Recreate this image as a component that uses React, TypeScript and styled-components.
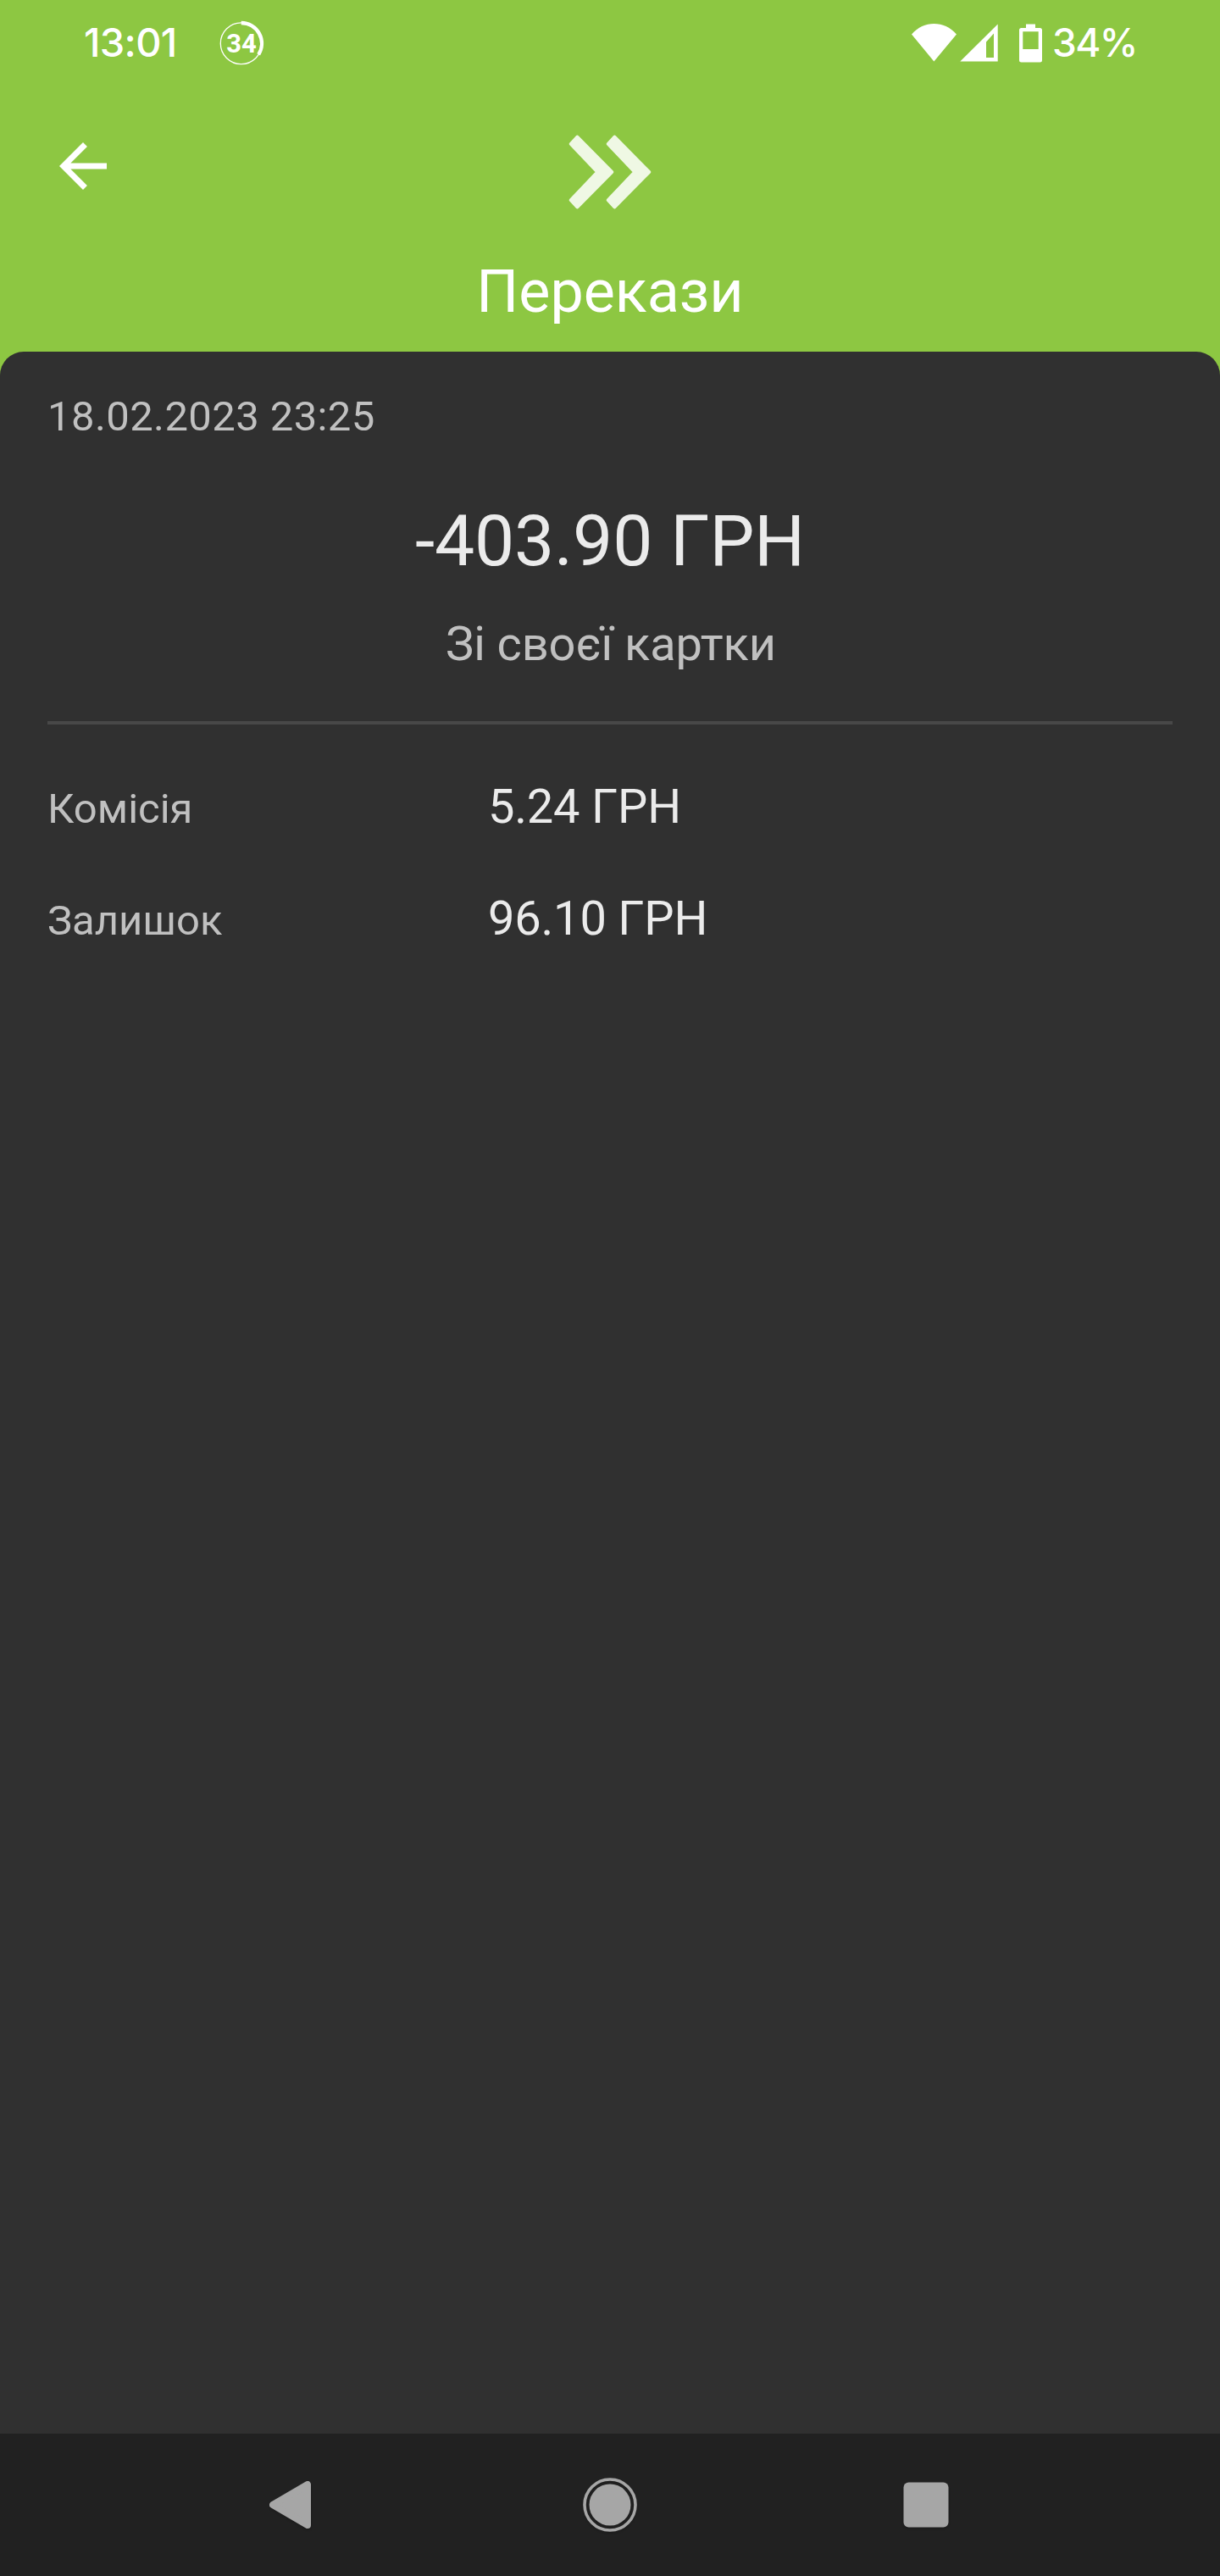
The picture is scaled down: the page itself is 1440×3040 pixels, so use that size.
import React from "react";
import styled, { createGlobalStyle } from "styled-components";

const colors = {
  brand: "#8dc742",
  surface: "#303030",
  navBar: "#212121",
  navIcon: "#a6a6a6",
  muted: "#c0c0c0",
  bright: "#ebebeb",
  line: "#484848",
};

const GlobalStyle = createGlobalStyle`
  * { box-sizing: border-box; }
  body {
    margin: 0;
    background: ${colors.surface};
    font-family: Roboto, "Noto Sans", sans-serif;
  }
  svg { display: block; flex: none; }
`;

const Screen = styled.div`
  display: flex;
  flex-direction: column;
  width: 1440px;
  height: 3040px;
  background: ${colors.brand};
`;

const StatusBar = styled.div`
  display: flex;
  align-items: center;
  justify-content: space-between;
  height: 102px;
  padding: 0 99px;
  color: #fff;
`;

const StatusGroup = styled.div`
  display: flex;
  align-items: center;
`;

const StatusText = styled.span<{ $width: number; $size: number; $spacing: number }>`
  width: ${(p) => p.$width}px;
  padding-bottom: 2px;
  font: 500 ${(p) => p.$size}px/58px Inter, Roboto, sans-serif;
  letter-spacing: ${(p) => p.$spacing}px;
  white-space: nowrap;
`;

const Badge = styled.div`
  display: grid;
  place-items: center;
  width: 56px;
  height: 56px;
  margin-left: 50px;

  > * { grid-area: 1 / 1; }
`;

const BadgeText = styled.span`
  padding-top: 2px;
  font-size: 31px;
  font-weight: 700;
  line-height: 38px;
`;

const Header = styled.header`
  display: grid;
  grid-template-columns: 84px 1fr 84px;
  grid-template-rows: 201px 112px;
  padding: 0 56px;
  color: #fff;
`;

const BackButton = styled.button`
  width: 84px;
  height: 84px;
  margin-top: 52px;
  padding: 0;
  border: 0;
  background: none;
  color: inherit;
`;

const Emblem = styled.div`
  display: flex;
  justify-content: center;
  padding-top: 57px;
`;

const Title = styled.h1`
  grid-column: 1 / -1;
  margin: 0;
  font-size: 70px;
  font-weight: 400;
  line-height: 82px;
  text-align: center;
`;

const Card = styled.main`
  flex: 1;
  padding: 48px 56px 0;
  border-radius: 28px 28px 0 0;
  background: ${colors.surface};
`;

const DateLine = styled.div`
  color: ${colors.muted};
  font-size: 49px;
  letter-spacing: 0.4px;
  line-height: 58px;
`;

const Amount = styled.div`
  margin-top: 69px;
  color: ${colors.bright};
  font-size: 84px;
  letter-spacing: -0.15px;
  line-height: 98px;
  text-align: center;
`;

const Source = styled.div`
  margin-top: 39px;
  padding-left: 2px;
  color: ${colors.muted};
  font-size: 56px;
  letter-spacing: -0.1px;
  line-height: 66px;
  text-align: center;
`;

const Divider = styled.hr`
  height: 4px;
  margin: 58px 0 64px;
  border: 0;
  background: ${colors.line};
`;

const Details = styled.dl`
  display: grid;
  gap: 66px;
  margin: 0;
`;

const DetailRow = styled.div`
  display: grid;
  grid-template-columns: 520px 1fr;
  align-items: baseline;
  height: 66px;
`;

const Label = styled.dt`
  color: ${colors.muted};
  font-size: 49px;
  line-height: 58px;
`;

const Value = styled.dd`
  margin: 0;
  color: ${colors.bright};
  font-size: 56px;
  letter-spacing: -0.2px;
  line-height: 66px;
`;

const NavBar = styled.nav`
  display: flex;
  align-items: center;
  justify-content: center;
  gap: 275px;
  height: 168px;
  background: ${colors.navBar};

  svg { filter: drop-shadow(0 2px 1px rgba(0, 0, 0, 0.15)); }
`;

const details = [
  { label: "Комісія", value: "5.24 ГРН" },
  { label: "Залишок", value: "96.10 ГРН" },
];

const BatteryRing = () => (
  <svg width="56" height="56" viewBox="0 0 56 56" fill="none" stroke="#fff">
    <circle cx="27.7" cy="28.3" r="24.4" strokeWidth="1.3" />
    <path d="M27.7 4a24.3 24.3 0 0 1 20.5 37.3" strokeWidth="4.3" />
  </svg>
);

/* Wi-Fi, mobile signal and battery share one strip so their spacing stays fixed. */
const StatusIcons = () => (
  <svg width="168" height="102" viewBox="1074 0 168 102" fill="#fff">
    <path d="M1102.4 72.4L1076 40.4C1083.5 32.2 1092.5 28 1102.4 28S1121.5 32.2 1129 40.4Z" />
    <path
      fillRule="evenodd"
      d="M1133.3 72.6L1177.7 28.4V72.6ZM1164 49.5V68H1173V39.5Z"
    />
    <path
      fillRule="evenodd"
      d="M1211 28.6h11V33h5.500a2.500 2.500 0 0 1 2.500 2.500v35.600a2.500 2.500 0 0 1-2.500 2.500h-22a2.500 2.500 0 0 1-2.500-2.500V35.500a2.500 2.500 0 0 1 2.500-2.500h5.500ZM1207.300 37.300V58h18.400V37.300Z"
    />
  </svg>
);

const ArrowBack = () => (
  <svg width="84" height="84" viewBox="0 0 24 24" fill="currentColor">
    <path d="M20 11H7.83l5.59-5.59L12 4l-8 8 8 8 1.41-1.41L7.83 13H20v-2z" />
  </svg>
);

const chevron =
  "M11.4 2.6L52.2 44L11.4 85.4L3.8 77.2L35.4 44L3.8 10.8Z";

const DoubleChevron = () => (
  <svg width="100" height="88" viewBox="0 0 100 88">
    <g fill="#eff8e4" stroke="#eff8e4" strokeWidth="4" strokeLinejoin="round">
      <path d={chevron} />
      <path d={chevron} transform="translate(44 0)" />
    </g>
  </svg>
);

export default function App() {
  return (
    <>
      <GlobalStyle />
      <Screen>
        <StatusBar>
          <StatusGroup>
            <StatusText $width={108} $size={47} $spacing={-0.7}>13:01</StatusText>
            <Badge>
              <BatteryRing />
              <BadgeText>34</BadgeText>
            </Badge>
          </StatusGroup>
          <StatusGroup>
            <StatusIcons />
            <StatusText $width={99} $size={46} $spacing={-1.7}>
              34%
            </StatusText>
          </StatusGroup>
        </StatusBar>
        <Header>
          <BackButton aria-label="Назад">
            <ArrowBack />
          </BackButton>
          <Emblem>
            <DoubleChevron />
          </Emblem>
          <Title>Перекази</Title>
        </Header>
        <Card>
          <DateLine>18.02.2023 23:25</DateLine>
          <Amount>-403.90 ГРН</Amount>
          <Source>Зі своєї картки</Source>
          <Divider />
          <Details>
            {details.map((d) => (
              <DetailRow key={d.label}>
                <Label>{d.label}</Label>
                <Value>{d.value}</Value>
              </DetailRow>
            ))}
          </Details>
        </Card>
        <NavBar>
          <svg width="98" height="98" viewBox="0 0 98 98" fill={colors.navIcon}>
            <path
              d="M24 49L65 25V73Z"
              stroke={colors.navIcon}
              strokeWidth="8"
              strokeLinejoin="round"
            />
          </svg>
          <svg width="98" height="98" viewBox="0 0 98 98" fill={colors.navIcon}>
            <circle cx="49" cy="49" r="24.5" />
            <circle
              cx="49"
              cy="49"
              r="30"
              fill="none"
              stroke={colors.navIcon}
              strokeWidth="3.6"
            />
          </svg>
          <svg width="98" height="98" viewBox="0 0 98 98" fill={colors.navIcon}>
            <rect x="22.5" y="22.4" width="53" height="53" rx="6" />
          </svg>
        </NavBar>
      </Screen>
    </>
  );
}
